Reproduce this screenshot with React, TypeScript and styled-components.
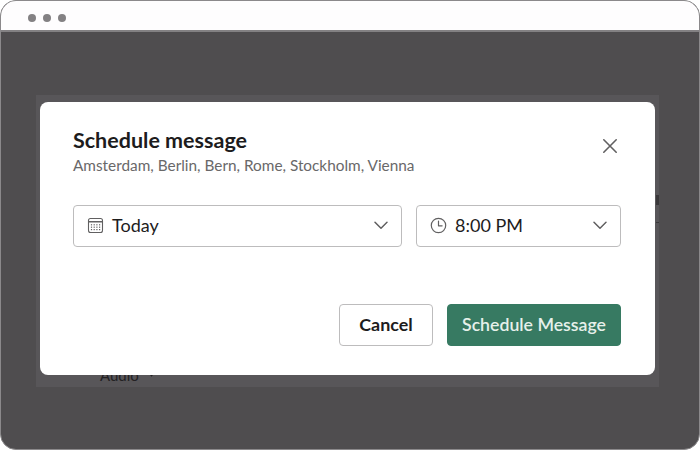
import React from "react";
import styled, { createGlobalStyle } from "styled-components";

const Global = createGlobalStyle`
  html, body { margin: 0; padding: 0; background: #ffffff; }
  body { width: 700px; height: 450px; overflow: hidden; font-family: Lato, "Open Sans", sans-serif; }
`;

const Win = styled.div`
  width: 700px;
  height: 450px;
  box-sizing: border-box;
  border: 1px solid #8b898b;
  border-radius: 16px;
  overflow: hidden;
  display: flex;
  flex-direction: column;
  background: #4f4d4f;
`;

const TitleBar = styled.div`
  height: 31px;
  flex: none;
  box-sizing: border-box;
  background: #fefdfe;
  border-bottom: 2px solid #838183;
  display: flex;
  align-items: center;
  gap: 7px;
  padding: 5px 0 0 27px;
`;

const Dot = styled.span`
  width: 8px;
  height: 8px;
  border-radius: 50%;
  background: #838183;
`;

const Backdrop = styled.div`
  flex: 1;
  display: flex;
  justify-content: center;
  align-items: center;
  padding-right: 5px;
`;

const Halo = styled.div`
  position: relative;
  background: #585659;
  padding: 7px 4px 12px 4px;
`;

const Modal = styled.div`
  position: relative;
  z-index: 1;
  width: 615px;
  height: 273px;
  box-sizing: border-box;
  background: #ffffff;
  border-radius: 8px;
  padding: 26px 34px 29px 33px;
  display: flex;
  flex-direction: column;
`;

const Header = styled.div`
  display: flex;
  justify-content: space-between;
  align-items: flex-start;
`;

const Heading = styled.div`
  display: flex;
  flex-direction: column;
`;

const Title = styled.h2`
  margin: 0;
  font-size: 21.5px;
  line-height: 24px;
  font-weight: 700;
  color: #1d1c1d;
`;

const Subtitle = styled.div`
  margin-top: 3px;
  font-size: 15.35px;
  line-height: 20px;
  color: #696869;
`;

const Close = styled.button`
  border: 0;
  background: none;
  padding: 0;
  margin: 10px 3px 0 0;
  width: 16px;
  height: 16px;
  color: #616061;
  display: flex;
`;

const Fields = styled.div`
  display: flex;
  gap: 14px;
  margin-top: 30px;
`;

const Select = styled.div<{ $w: number }>`
  width: ${(p) => p.$w}px;
  height: 42px;
  box-sizing: border-box;
  border: 1px solid #bdbcbd;
  border-radius: 4px;
  display: flex;
  align-items: center;
  padding: 0 13px;
  gap: 8px;
  font-size: 18px;
  color: #1d1c1d;
`;

const Value = styled.span`
  flex: 1;
  position: relative;
  top: -1px;
`;

const Footer = styled.div`
  margin-top: auto;
  display: flex;
  justify-content: flex-end;
  gap: 14px;
`;

const Button = styled.button<{ $primary?: boolean }>`
  height: 42px;
  box-sizing: border-box;
  border-radius: 4px;
  font-family: inherit;
  font-size: ${(p) => (p.$primary ? 17.7 : 17.9)}px;
  font-weight: ${(p) => (p.$primary ? 600 : 700)};
  padding: 0 0 1px;
  width: ${(p) => (p.$primary ? 174 : 94)}px;
  color: ${(p) => (p.$primary ? "#e6f0ea" : "#1d1c1d")};
  background: ${(p) => (p.$primary ? "#377a62" : "#ffffff")};
  border: 1px solid ${(p) => (p.$primary ? "#377a62" : "#bdbcbd")};
`;

const Peek = styled.div`
  position: absolute;
  left: 64px;
  top: 271px;
  display: flex;
  align-items: center;
  gap: 9px;
  font-size: 15px;
  line-height: 18px;
  color: #232123;
`;

const PeekMark = styled.span`
  width: 6px;
  height: 6px;
  margin-top: -7px;
  border-right: 1px solid #232123;
  border-bottom: 1px solid #232123;
  transform: rotate(45deg);
`;

const Tick = styled.span<{ $top: number; $h: number }>`
  position: absolute;
  right: 0;
  top: ${(p) => p.$top}px;
  width: 3px;
  height: ${(p) => p.$h}px;
  background: #3a383a;
`;

const Calendar = () => (
  <svg width="17" height="17" viewBox="0 0 17 17" fill="none" stroke="#616061" strokeWidth="1.1">
    <rect x="1.5" y="1.5" width="14" height="14" rx="2" />
    <path d="M1.5 4.8h14" strokeWidth="1.6" />
    <g fill="#616061" stroke="none">
      {[4.5, 7.2, 9.9, 12.6].map((x) =>
        [7.8, 10.2, 12.6].map((y) => <rect key={`${x}-${y}`} x={x - 0.6} y={y - 0.6} width="1.2" height="1.2" />)
      )}
    </g>
  </svg>
);

const Clock = () => (
  <svg width="17" height="17" viewBox="0 0 17 17" fill="none" stroke="#616061" strokeWidth="1.2">
    <circle cx="8.5" cy="8.5" r="7.2" />
    <path d="M8.5 4.2v4.6h3.6" strokeLinecap="round" strokeLinejoin="round" />
  </svg>
);

const Chevron = () => (
  <svg width="14" height="9" viewBox="0 0 14 9" fill="none" stroke="#616061" strokeWidth="1.5" strokeLinecap="round" strokeLinejoin="round">
    <path d="M1 1.2l6 6 6-6" />
  </svg>
);

export default function App() {
  return (
    <>
      <Global />
      <Win>
        <TitleBar>
          <Dot />
          <Dot />
          <Dot />
        </TitleBar>
        <Backdrop>
          <Halo>
            <Modal>
              <Header>
                <Heading>
                  <Title>Schedule message</Title>
                  <Subtitle>Amsterdam, Berlin, Bern, Rome, Stockholm, Vienna</Subtitle>
                </Heading>
                <Close aria-label="Close">
                  <svg width="16" height="16" viewBox="0 0 16 16" fill="none" stroke="currentColor" strokeWidth="1.6" strokeLinecap="round">
                    <path d="M1.8 1.8l12.4 12.4M14.2 1.8L1.8 14.2" />
                  </svg>
                </Close>
              </Header>
              <Fields>
                <Select $w={329}>
                  <Calendar />
                  <Value>Today</Value>
                  <Chevron />
                </Select>
                <Select $w={205}>
                  <Clock />
                  <Value>8:00 PM</Value>
                  <Chevron />
                </Select>
              </Fields>
              <Footer>
                <Button>Cancel</Button>
                <Button $primary>Schedule Message</Button>
              </Footer>
            </Modal>
            <Peek>
              Audio
              <PeekMark />
            </Peek>
            <Tick $top={100} $h={10} />
            <Tick $top={127} $h={1} />
          </Halo>
        </Backdrop>
      </Win>
    </>
  );
}
